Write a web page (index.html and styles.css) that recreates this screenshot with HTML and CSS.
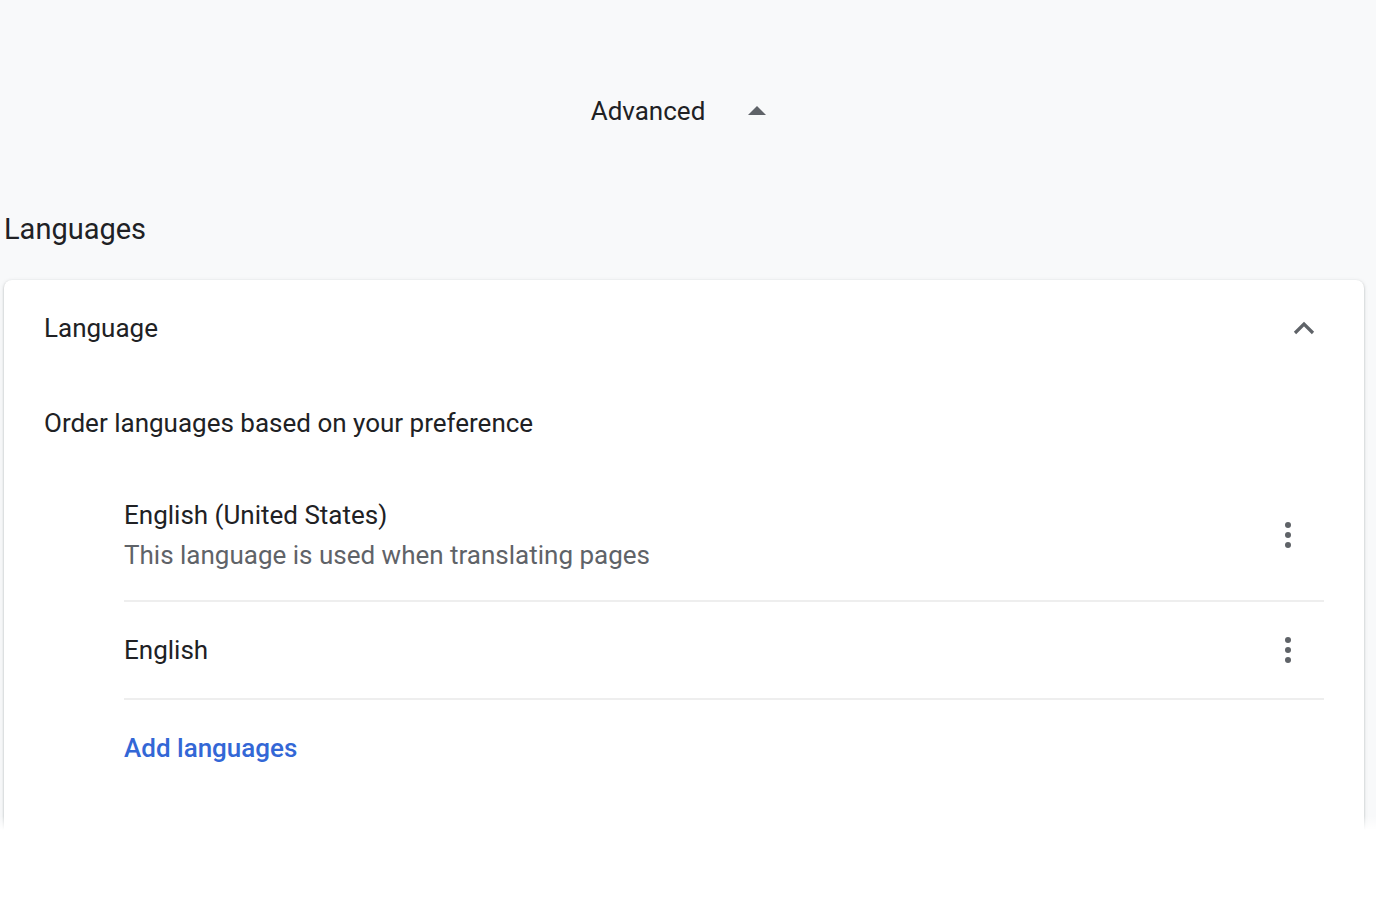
FILE: index.html
```html
<!DOCTYPE html>
<html lang="en">
<head>
  <meta charset="UTF-8">
  <title>Settings - Languages</title>
  <link rel="stylesheet" href="styles.css">
</head>
<body>
  <div class="page">
    <div class="advanced">
      <span class="advanced-label">Advanced</span>
      <span class="advanced-toggle">
        <svg width="18" height="9" viewBox="0 0 18 9"><path d="M0 9 L9 0 L18 9 Z" fill="#5f6368"/></svg>
      </span>
    </div>

    <h2 class="section-title">Languages</h2>

    <div class="card">
      <div class="row header-row">
        <span>Language</span>
        <svg class="chevron" width="24" height="14" viewBox="0 0 24 14"><path d="M3 12 L12 3 L21 12" fill="none" stroke="#5f6368" stroke-width="3.2"/></svg>
      </div>

      <div class="row sub-row">Order languages based on your preference</div>

      <div class="lang-list">
        <div class="lang-item tall">
          <div class="lang-text">
            <div class="lang-name">English (United States)</div>
            <div class="lang-note">This language is used when translating pages</div>
          </div>
          <span class="more"><i></i><i></i><i></i></span>
        </div>
        <div class="lang-item">
          <div class="lang-text">
            <div class="lang-name">English</div>
          </div>
          <span class="more"><i></i><i></i><i></i></span>
        </div>
        <div class="add-row">
          <a class="add-link" href="#">Add languages</a>
        </div>
      </div>
    </div>
    <div class="fade"></div>
  </div>
</body>
</html>
```

FILE: styles.css
```css
body {
  margin: 0;
  background: #ffffff;
  font-family: Roboto, "Noto Sans", Arial, sans-serif;
  color: #202124;
}

.page {
  position: relative;
  height: 830px;
  overflow: hidden;
  background: #f8f9fa;
}

.advanced {
  height: 96px;
  margin-top: 63px;
  padding-right: 4px;
  display: flex;
  align-items: center;
  justify-content: center;
  gap: 28px;
  font-size: 26px;
}

.advanced-toggle {
  width: 48px;
  height: 48px;
  display: flex;
  align-items: center;
  justify-content: center;
}

.advanced-toggle svg {
  margin-top: -2px;
}

.section-title {
  margin: 0;
  padding: 52px 0 33px 4px;
  line-height: 36px;
  font-size: 29px;
  font-weight: 400;
}

.card {
  margin: 0 12px 0 4px;
  background: #ffffff;
  border-radius: 8px;
  box-shadow: 0 1px 2px rgba(60,64,67,0.3), 0 1px 4px rgba(60,64,67,0.15);
  height: 700px;
}

.row {
  display: flex;
  align-items: center;
  justify-content: space-between;
  padding: 0 40px;
  font-size: 26px;
}

.header-row {
  height: 95px;
}

.chevron {
  margin-right: 8px;
}

.sub-row {
  height: 95px;
}

.lang-list {
  margin: 0 40px 0 120px;
}

.lang-item {
  display: flex;
  align-items: center;
  justify-content: space-between;
  height: 96px;
  border-bottom: 2px solid #eeeeee;
}

.lang-item.tall {
  height: 130px;
}

.lang-name {
  font-size: 26px;
  line-height: 40px;
}

.lang-note {
  font-size: 26px;
  line-height: 40px;
  color: #5f6368;
}

.more {
  width: 48px;
  margin-right: 12px;
  display: flex;
  flex-direction: column;
  align-items: center;
  gap: 4px;
}

.more i {
  display: block;
  width: 6px;
  height: 6px;
  border-radius: 50%;
  background: #5f6368;
}

.add-row {
  height: 96px;
  display: flex;
  align-items: center;
}

.add-link {
  font-size: 26px;
  font-weight: 500;
  color: #3367d6;
  text-decoration: none;
}

.fade {
  position: absolute;
  left: 0;
  right: 0;
  bottom: 0;
  height: 14px;
  background: linear-gradient(rgba(255,255,255,0), #ffffff);
}
```
